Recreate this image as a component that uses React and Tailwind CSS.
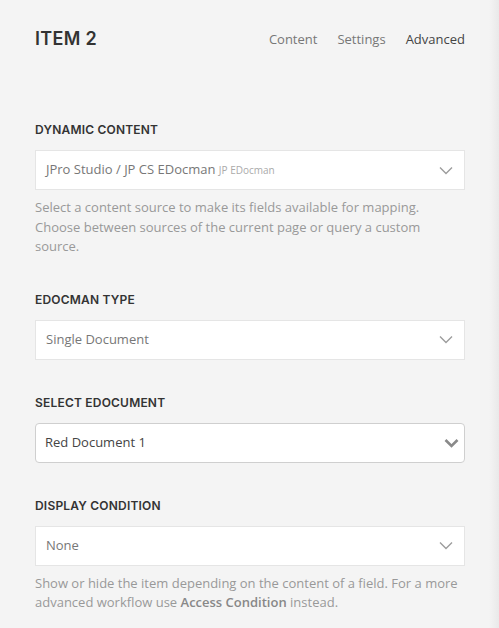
import React from 'react';

const head = { fontFamily: 'Inter, "Open Sans", sans-serif' };
const body = { fontFamily: '"Open Sans", "Noto Sans", sans-serif' };

function Chevron({ bold }) {
  return bold ? (
    <svg width="15" height="10" viewBox="0 0 15 10" className="shrink-0">
      <path d="M1.5 2 L7.5 8 L13.5 2" fill="none" stroke="#8a8a8a" strokeWidth="2.6" />
    </svg>
  ) : (
    <svg width="14" height="9" viewBox="0 0 14 9" className="shrink-0">
      <path d="M1 1.5 L7 7.5 L13 1.5" fill="none" stroke="#9d9d9d" strokeWidth="1.4" />
    </svg>
  );
}

function Select({ children, active }) {
  if (active) {
    return (
      <div className="h-[40px] flex items-center justify-between bg-white border border-[#cfcfcf] rounded-[4px] pl-[9px] pr-[5px]">
        <span className="text-[13px] text-[#444]">{children}</span>
        <Chevron bold />
      </div>
    );
  }
  return (
    <div className="h-[40px] flex items-center justify-between bg-white border border-[#e5e5e5] pl-[10px] pr-[11px]">
      <span className="text-[13px] text-[#777]">{children}</span>
      <Chevron />
    </div>
  );
}

function Field({ label, children, help }) {
  return (
    <div className="mt-[34px] first:mt-0">
      <div style={head} className="text-[12px] leading-[18px] font-semibold text-[#333] uppercase tracking-[0.2px] mb-[11px]">{label}</div>
      {children}
      {help && <p className="mt-[8px] text-[13px] leading-[19.5px] text-[#999]">{help}</p>}
    </div>
  );
}

export default function App() {
  return (
    <div style={body} className="w-[499px] h-[628px] bg-[#f4f4f4] flex overflow-hidden">
      <div className="flex-1 pl-[35px] pr-[24px]">
        {/* Header */}
        <div className="pt-[25px] flex items-center justify-between h-[53px]">
          <h1 style={head} className="text-[18px] leading-[28px] font-semibold text-[#333] tracking-[0.3px]">ITEM 2</h1>
          <div className="flex gap-[20px] text-[13px] leading-[28px]">
            <span className="text-[#777]">Content</span>
            <span className="text-[#777]">Settings</span>
            <span className="text-[#444]">Advanced</span>
          </div>
        </div>

        <div className="mt-[68px]">
          <Field
            label="Dynamic Content"
            help="Select a content source to make its fields available for mapping. Choose between sources of the current page or query a custom source."
          >
            <Select>
              JPro Studio / JP CS EDocman <span className="text-[10px] text-[#aaa]">JP EDocman</span>
            </Select>
          </Field>

          <Field label="Edocman Type">
            <Select>Single Document</Select>
          </Field>

          <Field label="Select EDocument">
            <Select active>Red Document 1</Select>
          </Field>

          <Field
            label="Display Condition"
            help={<>Show or hide the item depending on the content of a field. For a more advanced workflow use <span className="font-semibold text-[#888]">Access Condition</span> instead.</>}
          >
            <Select>None</Select>
          </Field>
        </div>
      </div>
      <div className="w-[10px] bg-linear-to-r from-[#f4f4f4] to-[#e9e9e9]" />
    </div>
  );
}
